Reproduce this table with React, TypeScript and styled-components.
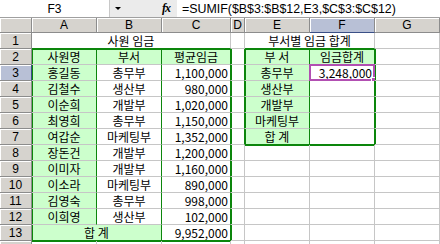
import React from "react";
import styled, { createGlobalStyle } from "styled-components";

// sheet colours
const GREEN = "#0c860c";
const GRID = "#c6c6c6";
const FILL = "#ccffcc";
const HEAD = "#d6d3ce";
const HEAD_SEL = "#b8c0d6";

const GlobalStyle = createGlobalStyle`
  html, body {
    margin: 0;
    padding: 0;
    width: 440px;
    height: 244px;
    overflow: hidden;
    background: #ffffff;
  }
  body {
    font-family: "Noto Sans CJK KR", "Liberation Sans", sans-serif;
    font-size: 12px;
    color: #000;
  }
`;

type Align = "left" | "center" | "right";

interface CellSpec {
  text?: string;
  span?: number;
  fill?: boolean;
  align?: Align;
  selected?: boolean;
}

const COLS = ["A", "B", "C", "D", "E", "F", "G"];

const people: [string, string, string][] = [
  ["홍길동", "총무부", "1,100,000"],
  ["김철수", "생산부", "980,000"],
  ["이순희", "개발부", "1,020,000"],
  ["최영희", "총무부", "1,150,000"],
  ["여갑순", "마케팅부", "1,352,000"],
  ["장돈건", "개발부", "1,200,000"],
  ["이미자", "개발부", "1,160,000"],
  ["이소라", "마케팅부", "890,000"],
  ["김영숙", "총무부", "998,000"],
  ["이희영", "생산부", "102,000"],
];

const depts = ["총무부", "생산부", "개발부", "마케팅부", "합 계"];

const buildRows = (): CellSpec[][] => {
  const rows: CellSpec[][] = [];
  rows.push([{ text: "사원 임금", span: 3 }, {}, { text: "부서별 임금 합계", span: 2 }, {}]);
  rows.push([
    { text: "사원명", fill: true },
    { text: "부서", fill: true },
    { text: "평균임금", fill: true },
    {},
    { text: "부 서", fill: true },
    { text: "임금합계", fill: true },
    {},
  ]);
  people.forEach((p, i) => {
    const dept = depts[i];
    rows.push([
      { text: p[0], fill: true },
      { text: p[1] },
      { text: p[2], align: "right" },
      {},
      dept ? { text: dept, fill: true } : {},
      i === 0 ? { text: "3,248,000", align: "right", selected: true } : {},
      {},
    ]);
  });
  rows.push([{ text: "합 계", span: 2, fill: true }, { text: "9,952,000", align: "right" }, {}, {}, {}, {}]);
  rows.push([{}, {}, {}, {}, {}, {}, {}]);
  return rows;
};

// line to the right of column c (0 = row header) on row r
const vLine = (r: number, c: number) => {
  if (r >= 2 && r <= 13 && (c === 0 || c === 3)) return "thick";
  if (r >= 2 && r <= 12 && (c === 1 || c === 2)) return "thin";
  if (r === 13 && c === 2) return "thin";
  if (r >= 2 && r <= 7 && (c === 4 || c === 6)) return "thick";
  if (r >= 2 && r <= 7 && c === 5) return "thin";
  return null;
};

// line under row r in column c
const hLine = (r: number, c: number) => {
  if (c >= 1 && c <= 3 && (r === 1 || r === 13)) return "thick";
  if (c >= 5 && c <= 6 && (r === 1 || r === 7)) return "thick";
  return null;
};

const App: React.FC = () => {
  const rows = buildRows();

  return (
    <>
      <GlobalStyle />
      <Window>
        <FormulaBar>
          <NameBox>F3</NameBox>
          <DropArrow />
          <FxLabel>fx</FxLabel>
          <FormulaInput>=SUMIF($B$3:$B$12,E3,$C$3:$C$12)</FormulaInput>
        </FormulaBar>
        <Sheet>
          <Corner />
          {COLS.map((c) => (
            <ColHeader key={c} $selected={c === "F"}>
              {c}
            </ColHeader>
          ))}
          {rows.map((row, ri) => {
            const r = ri + 1;
            let col = 1;
            return (
              <React.Fragment key={r}>
                {/* row 14 is only a sliver at the bottom edge */}
                <RowHeader $selected={r === 3}>{r <= 13 ? r : ""}</RowHeader>
                {row.map((cell, ci) => {
                  const c = col;
                  const span = cell.span ?? 1;
                  col += span;
                  const right = vLine(r, c + span - 1);
                  const bottom = hLine(r, c);
                  return (
                    <Cell
                      key={ci}
                      $span={span}
                      $fill={!!cell.fill}
                      $align={cell.align ?? "center"}
                      $right={right ? GREEN : GRID}
                      $bottom={bottom ? GREEN : GRID}
                      $insetLeft={vLine(r, c - 1) === "thick"}
                      $insetTop={hLine(r - 1, c) === "thick"}
                    >
                      {cell.text}
                      {cell.selected && (
                        <>
                          <Selection />
                          <FillHandle />
                        </>
                      )}
                    </Cell>
                  );
                })}
              </React.Fragment>
            );
          })}
        </Sheet>
      </Window>
    </>
  );
};

const Window = styled.div`
  width: 440px;
  height: 244px;
  overflow: hidden;
  display: flex;
  flex-direction: column;
`;

const FormulaBar = styled.div`
  height: 18px;
  flex-shrink: 0;
  display: flex;
  align-items: stretch;
  background: #ebebeb;
  box-sizing: border-box;
  border-bottom: 1px solid #a0a0a0;
`;

const NameBox = styled.div`
  width: 110px;
  background: #ffffff;
  border-right: 1px solid #c8c8c8;
  display: flex;
  align-items: center;
  justify-content: center;
  font-family: "Liberation Sans", sans-serif;
  font-size: 12px;
  box-sizing: border-box;
`;

const DropArrow = styled.div`
  width: 0;
  height: 0;
  margin: 7px 0 0 5px;
  border-left: 3px solid transparent;
  border-right: 3px solid transparent;
  border-top: 3px solid #000;
`;

const FxLabel = styled.div`
  margin-left: 41px;
  width: 15px;
  display: flex;
  align-items: center;
  font-family: "Liberation Serif", serif;
  font-style: italic;
  font-weight: bold;
  font-size: 12px;
  letter-spacing: -1px;
`;

const FormulaInput = styled.div`
  flex: 1;
  background: #ffffff;
  display: flex;
  align-items: center;
  padding-left: 5px;
  font-family: "Liberation Sans", sans-serif;
  font-size: 12.4px;
  white-space: nowrap;
`;

const Sheet = styled.div`
  display: grid;
  grid-template-columns: 32px 65px 65px 69px 14px 65px 65px 65px;
  grid-template-rows: 15px repeat(14, 16px);
`;

const HeaderBase = styled.div<{ $selected?: boolean }>`
  box-sizing: border-box;
  display: flex;
  align-items: center;
  justify-content: center;
  font-family: "Liberation Sans", sans-serif;
  font-size: 12px;
  line-height: 1;
  background: ${(p) => (p.$selected ? HEAD_SEL : HEAD)};
  border-right: 1px solid #8c8c8c;
  border-bottom: 1px solid #8c8c8c;
  box-shadow: inset 1px 1px 0 #ffffff;
`;

const Corner = styled(HeaderBase)``;

const ColHeader = styled(HeaderBase)`
  border-bottom-color: ${(p) => (p.$selected ? "#3a4f86" : "#8c8c8c")};
`;

const RowHeader = styled(HeaderBase)`
  border-right-color: ${(p) => (p.$selected ? "#3a4f86" : "#8c8c8c")};
  padding-top: 1px;
`;

const Cell = styled.div<{
  $span: number;
  $fill: boolean;
  $align: Align;
  $right: string;
  $bottom: string;
  $insetLeft: boolean;
  $insetTop: boolean;
}>`
  position: relative;
  box-sizing: border-box;
  grid-column: span ${(p) => p.$span};
  background: ${(p) => (p.$fill ? FILL : "#ffffff")};
  border-right: 1px solid ${(p) => p.$right};
  border-bottom: 1px solid ${(p) => p.$bottom};
  box-shadow: ${(p) =>
    [p.$insetLeft && `inset 1px 0 0 ${GREEN}`, p.$insetTop && `inset 0 1px 0 ${GREEN}`]
      .filter(Boolean)
      .join(", ") || "none"};
  display: flex;
  align-items: center;
  justify-content: ${(p) =>
    p.$align === "right" ? "flex-end" : p.$align === "left" ? "flex-start" : "center"};
  padding: 0 2px;
  font-size: 12px;
  line-height: 1;
  white-space: nowrap;
`;

const Selection = styled.div`
  position: absolute;
  left: -1px;
  top: -1px;
  right: -1px;
  bottom: -1px;
  border: 2px solid #b24fb2;
  pointer-events: none;
`;

const FillHandle = styled.div`
  position: absolute;
  right: -3px;
  bottom: -3px;
  width: 4px;
  height: 4px;
  background: #b24fb2;
  border: 1px solid #ffffff;
`;

export default App;
